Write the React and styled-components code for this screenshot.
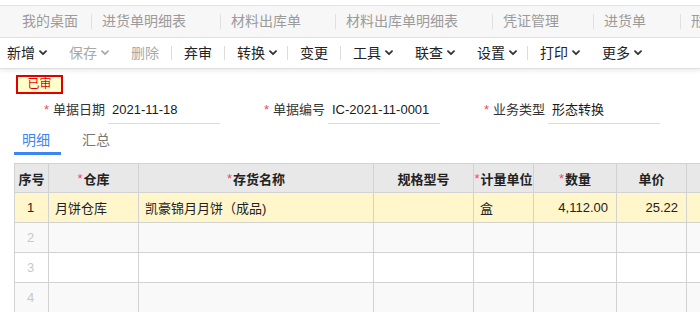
import React from "react";
import styled, { createGlobalStyle } from "styled-components";

const FONT = `"Liberation Sans", "Noto Sans CJK SC", sans-serif`;

const GlobalStyle = createGlobalStyle`
  * { box-sizing: border-box; }
  body {
    margin: 0;
    background: #fff;
    font-family: ${FONT};
    color: #333;
    overflow: hidden;
  }
`;

const tabs = [
  { label: "我的桌面", home: true },
  { label: "进货单明细表" },
  { label: "材料出库单" },
  { label: "材料出库单明细表" },
  { label: "凭证管理" },
  { label: "进货单" },
  { label: "形态转换单" },
];

const tools = [
  { label: "新增", menu: true },
  { label: "保存", menu: true, disabled: true },
  { label: "删除", disabled: true },
  { sep: true },
  { label: "弃审" },
  { sep: true },
  { label: "转换", menu: true },
  { sep: true },
  { label: "变更" },
  { sep: true },
  { label: "工具", menu: true },
  { label: "联查", menu: true },
  { label: "设置", menu: true },
  { sep: true },
  { label: "打印", menu: true },
  { label: "更多", menu: true },
];

const fields = [
  { label: "单据日期", value: "2021-11-18" },
  { label: "单据编号", value: "IC-2021-11-0001" },
  { label: "业务类型", value: "形态转换" },
];

// the last column runs past the right edge, as in the screen
const columns = [
  { title: "序号", width: 34 },
  { title: "仓库", width: 90, required: true },
  { title: "存货名称", width: 235, required: true },
  { title: "规格型号", width: 100 },
  { title: "计量单位", width: 60, required: true },
  { title: "数量", width: 83, required: true },
  { title: "单价", width: 70 },
  { title: "", width: 120 },
];

const rows = [
  ["1", "月饼仓库", "凯豪锦月月饼（成品)", "", "盒", "4,112.00", "25.22", ""],
  ["2", "", "", "", "", "", "", ""],
  ["3", "", "", "", "", "", "", ""],
  ["4", "", "", "", "", "", "", ""],
];

const numeric = [false, false, false, false, false, true, true, true];

const Chevron = ({ color }) => (
  <ChevronSvg width="8" height="6" viewBox="0 0 8 6">
    <path d="M1 1.2 L4 4.2 L7 1.2" fill="none" stroke={color} strokeWidth="1.8" strokeLinecap="round" strokeLinejoin="round" />
  </ChevronSvg>
);

export default function App() {
  return (
    <Page>
      <GlobalStyle />
      <TabBar>
        {tabs.map((t, i) => (
          <React.Fragment key={t.label}>
            <TabItem $home={t.home}>{t.label}</TabItem>
            {i < tabs.length - 1 && <TabDivider />}
          </React.Fragment>
        ))}
      </TabBar>

      <Toolbar>
        {tools.map((t, i) =>
          t.sep ? (
            <ToolDivider key={i} />
          ) : (
            <ToolButton key={i} $menu={t.menu} $disabled={t.disabled}>
              {t.label}
              {t.menu && <Chevron color={t.disabled ? "#aaa" : "#333"} />}
            </ToolButton>
          )
        )}
      </Toolbar>

      <Content>
        <StatusBadge>已审</StatusBadge>

        <FieldRow>
          {fields.map((f) => (
            <Field key={f.label}>
              <FieldLabel>
                <Star>*</Star>
                {f.label}
              </FieldLabel>
              <FieldInput>{f.value}</FieldInput>
            </Field>
          ))}
        </FieldRow>

        <SubTabs>
          <SubTab $active>明细</SubTab>
          <SubTab>汇总</SubTab>
        </SubTabs>

        <Grid $cols={columns.map((c) => `${c.width}px`).join(" ")}>
          {columns.map((c, i) => (
            <HeadCell key={i}>
              {c.required && <HeadStar>*</HeadStar>}
              {c.title}
            </HeadCell>
          ))}
          {rows.map((r, ri) =>
            r.map((v, ci) => (
              <Cell
                key={`${ri}-${ci}`}
                $bg={ri === 0 ? "#fff6cc" : ri % 2 === 1 ? "#f9f9f9" : "#ffffff"}
                $align={ci === 0 ? "center" : numeric[ci] ? "right" : "left"}
                $muted={ci === 0 && ri > 0}
              >
                {v}
              </Cell>
            ))
          )}
        </Grid>
      </Content>
    </Page>
  );
}

const Page = styled.div`
  width: 100%;
  padding-top: 5px;
`;

const TabBar = styled.div`
  display: flex;
  align-items: center;
  height: 33px;
  padding-left: 12px;
  background: #f7f7f7;
  border-top: 1px solid #e3e3e3;
  border-bottom: 1px solid #e3e3e3;
  white-space: nowrap;
  overflow: hidden;
`;

const TabItem = styled.div`
  flex-shrink: 0;
  padding: 0 ${(p) => (p.$home ? 13 : 34)}px 0 10px;
  font-size: 14px;
  line-height: 31px;
  color: #9b9b9b;
`;

const TabDivider = styled.span`
  flex-shrink: 0;
  width: 1px;
  height: 15px;
  background: #e0e0e0;
`;

const Toolbar = styled.div`
  display: flex;
  align-items: center;
  height: 31px;
  border-bottom: 1px solid #e0e0e0;
  box-shadow: 0 2px 4px rgba(0, 0, 0, 0.08);
  white-space: nowrap;
`;

const ToolButton = styled.div`
  display: flex;
  align-items: center;
  flex-shrink: 0;
  padding: 0 ${(p) => (p.$menu ? 10 : 12)}px 0 12px;
  font-size: 14px;
  line-height: 30px;
  color: ${(p) => (p.$disabled ? "#a8a8a8" : "#222")};

  &:first-child {
    padding-left: 7px;
  }
`;

const ChevronSvg = styled.svg`
  margin-left: 4px;
  margin-top: -1px;
`;

const ToolDivider = styled.span`
  flex-shrink: 0;
  width: 1px;
  height: 14px;
  background: #dcdcdc;
`;

const Content = styled.div`
  padding-top: 6px;
`;

const StatusBadge = styled.div`
  width: 47px;
  height: 19px;
  margin-left: 16px;
  border: 2px solid #e00000;
  background: #ffffcc;
  color: #e00000;
  font-size: 12px;
  line-height: 15px;
  text-align: center;
`;

const FieldRow = styled.div`
  display: flex;
  margin-top: 3px;
`;

const Field = styled.div`
  display: flex;
  flex-shrink: 0;
  width: 220px;
`;

const FieldLabel = styled.div`
  width: 108px;
  margin-right: 3px;
  text-align: right;
  font-size: 13px;
  line-height: 26px;
  color: #333;
`;

const Star = styled.span`
  color: #f0466a;
  margin-right: 4px;
`;

const FieldInput = styled.div`
  flex-shrink: 0;
  width: 112px;
  height: 27px;
  padding-left: 4px;
  border-bottom: 1px solid #dcdcdc;
  font-size: 13px;
  line-height: 26px;
  color: #1a1a1a;
`;

const SubTabs = styled.div`
  display: flex;
  gap: 13px;
  margin: 4px 0 0 14px;
`;

const SubTab = styled.div`
  padding: 0 11px 0 8px;
  font-size: 14px;
  line-height: 24px;
  color: ${(p) => (p.$active ? "#3a86f5" : "#777")};
  border-bottom: 3px solid ${(p) => (p.$active ? "#3a86f5" : "transparent")};
`;

const Grid = styled.div`
  display: grid;
  grid-template-columns: ${(p) => p.$cols};
  grid-auto-rows: 30px;
  grid-template-rows: 29px;
  width: max-content;
  margin: 8px 0 0 14px;
  border-top: 1px solid #d2d2d2;
  border-left: 1px solid #d2d2d2;
`;

const HeadCell = styled.div`
  display: flex;
  align-items: center;
  justify-content: center;
  background: #e8e8e8;
  border-right: 1px solid #d2d2d2;
  border-bottom: 1px solid #d2d2d2;
  font-size: 13px;
  font-weight: bold;
  color: #222;
  white-space: nowrap;
  overflow: hidden;
`;

const HeadStar = styled.span`
  color: #f0466a;
  font-weight: normal;
  margin-right: 1px;
`;

const Cell = styled.div`
  display: flex;
  align-items: center;
  justify-content: ${(p) => (p.$align === "right" ? "flex-end" : p.$align === "center" ? "center" : "flex-start")};
  padding: 0 8px 0 6px;
  background: ${(p) => p.$bg};
  border-right: 1px solid #d2d2d2;
  border-bottom: 1px solid #d2d2d2;
  font-size: 13px;
  color: ${(p) => (p.$muted ? "#c8c8c8" : "#222")};
  white-space: nowrap;
  overflow: hidden;
`;
